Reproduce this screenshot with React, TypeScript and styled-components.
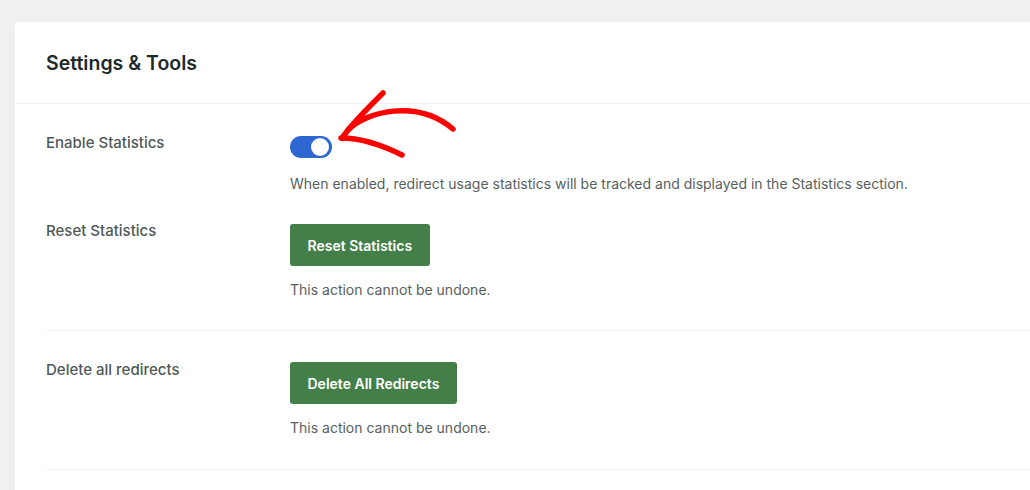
import React from "react";
import styled, { createGlobalStyle } from "styled-components";

const Global = createGlobalStyle`
  html, body { margin: 0; padding: 0; background: #f0f0f1; }
  body { font-family: Inter, "Noto Sans", "Liberation Sans", sans-serif; overflow: hidden; }
  * { box-sizing: border-box; }
`;

const Page = styled.div`
  padding: 22px 0 0 15px;
  height: 490px;
  overflow: hidden;
`;

const Card = styled.div`
  background: #ffffff;
  border-top-left-radius: 4px;
  margin-right: -20px;
  min-height: 480px;
`;

const Header = styled.div`
  height: 82px;
  display: flex;
  align-items: center;
  padding-left: 31px;
  border-bottom: 1px solid #f0f0f0;
`;

const Title = styled.h2`
  margin: 0;
  font-size: 19.5px;
  font-weight: 600;
  color: #1d2a29;
`;

const Body = styled.div`
  padding-left: 31px;
`;

const Group = styled.div<{ $top: number; $bottom: number }>`
  display: flex;
  flex-direction: column;
  gap: 26px;
  padding-top: ${(p) => p.$top}px;
  padding-bottom: ${(p) => p.$bottom}px;
  border-bottom: 1px solid #f0f0f0;
`;

const Row = styled.div`
  display: grid;
  grid-template-columns: 244px 1fr;
`;

const Label = styled.div`
  padding-top: 1px;
  font-size: 15px;
  line-height: 20px;
  font-weight: 500;
  color: #4f5958;
`;

const Control = styled.div<{ $offset: number }>`
  display: flex;
  flex-direction: column;
  align-items: flex-start;
  padding-top: ${(p) => p.$offset}px;
`;

const ToggleWrap = styled.div`
  position: relative;
  margin-bottom: 16px;
`;

const Toggle = styled.span`
  display: block;
  width: 42px;
  height: 22px;
  border-radius: 11px;
  background: #2f67d2;
  position: relative;
  &::after {
    content: "";
    position: absolute;
    right: 3px;
    top: 2px;
    width: 18px;
    height: 18px;
    border-radius: 50%;
    background: #ffffff;
  }
`;

const Arrow = styled.svg`
  position: absolute;
  left: 45px;
  top: -50px;
  overflow: visible;
`;

const Help = styled.p`
  margin: 0;
  font-size: 14px;
  line-height: 20px;
  color: #586160;
`;

const Button = styled.button`
  height: 42px;
  padding: 0 17.5px;
  border: none;
  border-radius: 3px;
  background: #447f49;
  color: #ffffff;
  font-family: Inter, "Noto Sans", "Liberation Sans", sans-serif;
  font-size: 14px;
  font-weight: 600;
  margin-bottom: 14px;
  cursor: pointer;
`;

export default function App() {
  return (
    <>
      <Global />
      <Page>
        <Card>
          <Header>
            <Title>Settings &amp; Tools</Title>
          </Header>
          <Body>
            <Group $top={28} $bottom={30}>
              <Row>
                <Label>Enable Statistics</Label>
                <Control $offset={4}>
                  <ToggleWrap>
                    <Toggle />
                    <Arrow width="125" height="75" viewBox="0 0 125 75">
                      <g fill="none" stroke="#ff0000" strokeWidth="5.5" strokeLinecap="round" strokeLinejoin="round">
                        <path d="M48 7 C 36 19, 18 36, 7 52" />
                        <path d="M13 44 C 30 26, 82 12, 118 43" />
                        <path d="M6 52 C 25 52, 45 58, 67 69" />
                      </g>
                    </Arrow>
                  </ToggleWrap>
                  <Help>When enabled, redirect usage statistics will be tracked and displayed in the Statistics section.</Help>
                </Control>
              </Row>
              <Row>
                <Label>Reset Statistics</Label>
                <Control $offset={4}>
                  <Button>Reset Statistics</Button>
                  <Help>This action cannot be undone.</Help>
                </Control>
              </Row>
            </Group>
            <Group $top={28} $bottom={31}>
              <Row>
                <Label>Delete all redirects</Label>
                <Control $offset={3}>
                  <Button>Delete All Redirects</Button>
                  <Help>This action cannot be undone.</Help>
                </Control>
              </Row>
            </Group>
          </Body>
        </Card>
      </Page>
    </>
  );
}
